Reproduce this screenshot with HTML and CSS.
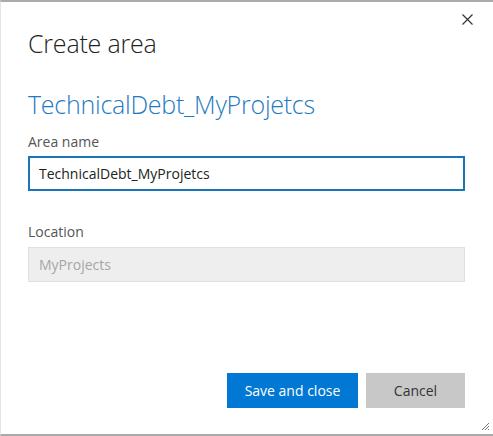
FILE: index.html
```html
<!DOCTYPE html>
<html>
<head>
<meta charset="utf-8">
<link rel="stylesheet" href="styles.css">
</head>
<body>
<div class="dialog">
  <div class="titlebar">
    <span class="close" aria-label="Close">
      <svg width="11" height="11" viewBox="0 0 11 11"><path d="M0.5 0.5L10.5 10.5M10.5 0.5L0.5 10.5" stroke="#333" stroke-width="1.2" fill="none"/></svg>
    </span>
  </div>
  <h1 class="title">Create area</h1>
  <div class="content">
    <h2 class="area-name">TechnicalDebt_MyProjetcs</h2>
    <label class="label">Area name</label>
    <div class="input focused">TechnicalDebt_MyProjetcs</div>
    <label class="label loc">Location</label>
    <div class="input disabled">MyProjects</div>
  </div>
  <div class="buttons">
    <button class="btn primary">Save and close</button>
    <button class="btn secondary">Cancel</button>
  </div>
  <svg class="grip" width="10" height="10" viewBox="0 0 10 10"><path d="M9 2L2 9M9 5L5 9M9 8L8 9" stroke="#777" stroke-width="1" fill="none"/></svg>
</div>
</body>
</html>
```
FILE: styles.css
```css
html, body { margin: 0; padding: 0; background: #fff; }
body { font-family: "Open Sans", "Segoe UI", sans-serif; }
.dialog {
  position: relative;
  box-sizing: border-box;
  width: 493px;
  height: 436px;
  border-top: 2px solid #aaaaaa;
  border-bottom: 2px solid #aaaaaa;
  border-left: 1px solid #e4e4e4;
  display: flex;
  flex-direction: column;
  padding: 0 28px 0 27px;
}
.titlebar { height: 24px; display: flex; justify-content: flex-end; align-items: flex-start; margin-right: -8px; }
.close { margin-top: 12px; display: block; line-height: 0; }
.title {
  margin: 0;
  font-weight: 300;
  font-size: 25px;
  color: #222;
  line-height: 34px;
  letter-spacing: -0.2px;
}
.content { margin-top: 27px; display: flex; flex-direction: column; }
.area-name {
  margin: 0;
  font-weight: 300;
  font-size: 25px;
  line-height: 34px;
  color: #1f7ac0;
  letter-spacing: -0.25px;
}
.label { font-size: 14px; color: #555; line-height: 20px; margin-top: 11px; }
.label.loc { margin-top: 31px; }
.input {
  box-sizing: border-box;
  height: 35px;
  margin-top: 4px;
  font-size: 14px;
  line-height: 20px;
  padding: 6px 9px;
  letter-spacing: 0;
}
.input.focused { border: 2px solid #1a74b8; color: #222; }
.input.disabled { border: 1px solid #e0e0e0; background: #eeeeee; color: #a6a6a6; padding: 7px 10px; margin-top: 5px; }
.buttons { margin-top: auto; margin-bottom: 26px; display: flex; justify-content: flex-end; gap: 8px; }
.btn {
  font-family: inherit;
  font-size: 14px;
  height: 35px;
  border: none;
  padding: 0;
}
.primary { width: 131px; background: #0078d4; color: #fff; }
.secondary { width: 99px; background: #c8c8c8; color: #333; }
.grip { position: absolute; right: 3px; bottom: 3px; }
```
